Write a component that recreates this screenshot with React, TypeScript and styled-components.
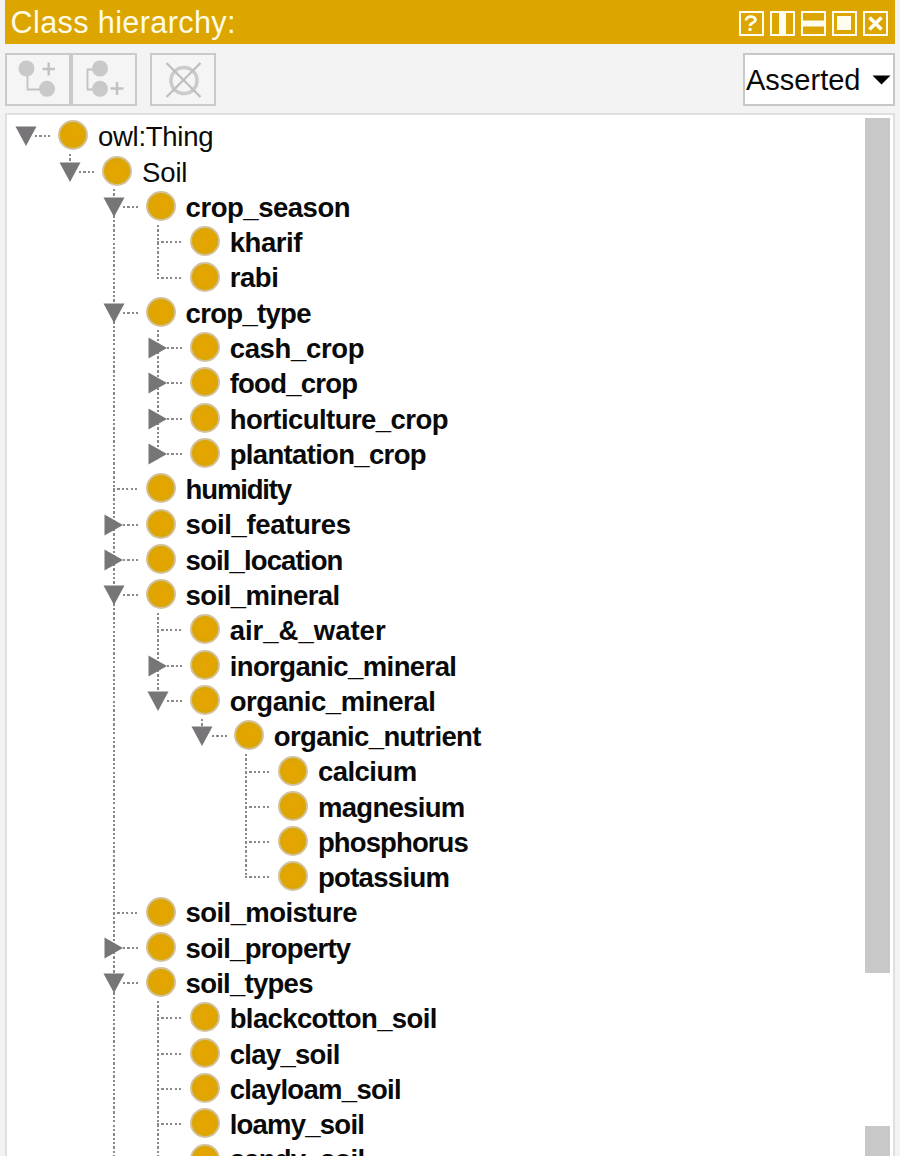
import React from "react";
import styled, { createGlobalStyle, css } from "styled-components";

const ROW = 35.29;
const INDENT = 44.1;

const GlobalStyle = createGlobalStyle`
  body { margin: 0; background: #f3f3f3; }
  * { box-sizing: border-box; }
`;

const Window = styled.div`
  height: 1156px;
  padding: 0 5px;
  overflow: hidden;
  display: flex;
  flex-direction: column;
  background: #f3f3f3;
  color: #0a0a0a;
  font-family: "Liberation Sans", Arial, sans-serif;
`;

const TitleBar = styled.header`
  flex: none;
  height: 44px;
  padding: 0 7.5px 0 5.5px;
  display: flex;
  align-items: center;
  justify-content: space-between;
  background: #dca500;
`;

const Title = styled.h1`
  margin: 0;
  font-size: 30.6px;
  line-height: 46px;
  font-weight: 400;
  letter-spacing: 0.38px;
  color: #fffbe6;
`;

const TitleActions = styled.div`
  display: flex;
  gap: 6px;
  padding-top: 2px;
  svg { display: block; }
`;

const Toolbar = styled.div`
  flex: none;
  height: 69px;
  padding-top: 9px;
  display: flex;
  align-items: flex-start;
`;

const ToolButton = styled.button<{ $gap?: number }>`
  width: 66px;
  height: 53px;
  margin: 0 0 0 ${(p) => p.$gap ?? 0}px;
  padding: 0;
  border: 2px solid #cacaca;
  background: #f5f5f5;
  svg { display: block; }
`;

const ModeSelect = styled.button`
  width: 152px;
  height: 53px;
  margin: 0 0 0 auto;
  padding: 1px 2px 0 1px;
  display: flex;
  align-items: center;
  justify-content: space-between;
  border: 2px solid #c8c8c8;
  background: #fff;
  color: #0a0a0a;
  font: 29px/50px "Liberation Sans", Arial, sans-serif;
  letter-spacing: 0px;
`;

const TreePanel = styled.main`
  flex: 1;
  min-height: 0;
  display: flex;
  justify-content: space-between;
  border: 2px solid #dfdfdf;
  border-bottom: 0;
  background: #fff;
`;

const Tree = styled.ul`
  margin: 0;
  padding: 3.8px 0 0 8px;
  list-style: none;
`;

const Row = styled.li`
  height: ${ROW}px;
  display: flex;
  align-items: center;
`;

const dots = (dir: string) =>
  css`repeating-linear-gradient(${dir}, #8a8a8a 0 2.1px, transparent 2.1px 4.41px)`;

const Guide = styled.span<{ $line: "none" | "full" | "half" }>`
  flex: none;
  width: ${INDENT}px;
  height: ${ROW}px;
  padding-left: 9.5px;
  &::before {
    content: "";
    display: ${(p) => (p.$line === "none" ? "none" : "block")};
    width: 2px;
    height: ${(p) => (p.$line === "half" ? "52%" : "100%")};
    background: ${dots("to bottom")};
  }
`;

const Branch = styled(Guide)`
  display: grid;
  grid-template-columns: ${INDENT - 9.5}px;
  align-items: center;
  > *, &::before { grid-area: 1 / 1; }
  &::before { align-self: start; }
`;

const Connector = styled.span<{ $leaf: boolean }>`
  justify-self: end;
  width: ${(p) => (p.$leaf ? 26 : 16)}px;
  height: 2px;
  margin-right: ${(p) => (p.$leaf ? 8.1 : 7.9)}px;
  background: ${dots("to right")};
`;

const Arrow = styled.svg`
  display: block;
  width: 22px;
  height: 22px;
  margin-left: -10px;
  fill: #777577;
`;

const ClassDot = styled.span`
  flex: none;
  width: 30px;
  height: 30px;
  margin: -2px 9.5px 0 -1.2px;
  border: 2px solid #d2c19c;
  border-radius: 50%;
  background: radial-gradient(#e4a500 0 35%, #d8a600 85%);
`;

const Label = styled.span<{ $plain: boolean; $tracking: number }>`
  padding: ${(p) => (p.$plain ? "1px 0 0 0.6px" : "1px 0 0")};
  white-space: nowrap;
  font-size: 27.5px;
  line-height: ${ROW}px;
  font-weight: ${(p) => (p.$plain ? 400 : 700)};
  letter-spacing: ${(p) => p.$tracking}px;
`;

const Scrollbar = styled.div`
  width: 28px;
  padding: 3px 3px 0 0;
  display: flex;
  flex-direction: column;
  gap: 153px;
`;

const Thumb = styled.div<{ $size?: number }>`
  flex: ${(p) => (p.$size ? `0 0 ${p.$size}px` : "1")};
  background: #c8c8c8;
`;

type State = "open" | "closed" | "leaf";
type Node = { name: string; depth: number; state: State; tracking: number };

const n = (depth: number, name: string, tracking: number, state: State = "leaf"): Node => ({
  depth, name, state, tracking,
});

const nodes: Node[] = [
  n(0, "owl:Thing", -0.28, "open"),
  n(1, "Soil", -0.17, "open"),
  n(2, "crop_season", -0.47, "open"),
  n(3, "kharif", -0.45),
  n(3, "rabi", -0.45),
  n(2, "crop_type", -0.7, "open"),
  n(3, "cash_crop", -0.33, "closed"),
  n(3, "food_crop", -0.77, "closed"),
  n(3, "horticulture_crop", -0.55, "closed"),
  n(3, "plantation_crop", -0.67, "closed"),
  n(2, "humidity", -1.15),
  n(2, "soil_features", -0.36, "closed"),
  n(2, "soil_location", -0.86, "closed"),
  n(2, "soil_mineral", -0.53, "open"),
  n(3, "air_&_water", 0),
  n(3, "inorganic_mineral", -0.6, "closed"),
  n(3, "organic_mineral", -0.45, "open"),
  n(4, "organic_nutrient", -0.62, "open"),
  n(5, "calcium", -0.53),
  n(5, "magnesium", -0.68),
  n(5, "phosphorus", -0.88),
  n(5, "potassium", -0.67),
  n(2, "soil_moisture", -0.58),
  n(2, "soil_property", -0.72, "closed"),
  n(2, "soil_types", -0.74, "open"),
  n(3, "blackcotton_soil", -0.62),
  n(3, "clay_soil", -0.7),
  n(3, "clayloam_soil", -0.7),
  n(3, "loamy_soil", -0.77),
  n(3, "sandy_soil", -0.75),
];

// A guide continues below a row while a later sibling exists at that depth;
// the list is cut off at its end, so depths 2 and 3 run on past the last row.
function continues(index: number, depth: number): boolean {
  for (let i = index + 1; i < nodes.length; i++) {
    if (nodes[i].depth === depth) return true;
    if (nodes[i].depth < depth) return false;
  }
  return depth === 2 || depth === 3;
}

function TreeRow({ node, index }: { node: Node; index: number }) {
  const { depth, state, name } = node;
  return (
    <Row>
      {Array.from({ length: depth }, (_, d) => (
        <Guide key={d} $line={continues(index, d) ? "full" : "none"} />
      ))}
      <Branch $line={depth === 0 ? "none" : continues(index, depth) ? "full" : "half"}>
        <Connector $leaf={state === "leaf"} />
        {state !== "leaf" && (
          <Arrow viewBox="0 0 22 22">
            <path d={state === "open" ? "M.5 1.5h21L11 21z" : "M1.5 .5v21L20 11z"} />
          </Arrow>
        )}
      </Branch>
      <ClassDot />
      <Label $plain={depth < 2} $tracking={node.tracking}>{name}</Label>
    </Row>
  );
}

function TitleIcon({ children }: { children: React.ReactNode }) {
  return (
    <svg width="25" height="25" viewBox="0 0 25 25" fill="none" stroke="#fffdf0" strokeWidth="2">
      <rect x="1" y="1" width="23" height="23" />
      {children}
    </svg>
  );
}

export default function App() {
  return (
    <>
      <GlobalStyle />
      <Window>
        <TitleBar>
          <Title>Class hierarchy:</Title>
          <TitleActions>
            <TitleIcon>
              <path d="M7 9.500c0-5 9.500-5 9.500-.5 0 3-5.500 2.500-5.500 6" strokeWidth="2.800" />
              <path d="M11 17v3" strokeWidth="3" />
            </TitleIcon>
            <TitleIcon><path d="M12.500 2v21" strokeWidth="7" /></TitleIcon>
            <TitleIcon><path d="M2 12.500h21" strokeWidth="6" /></TitleIcon>
            <TitleIcon><rect x="6" y="6" width="12" height="12" fill="#fffdf0" /></TitleIcon>
            <TitleIcon><path d="M6.500 6.500l12 12M18.500 6.500l-12 12" strokeWidth="3.700" /></TitleIcon>
          </TitleActions>
        </TitleBar>
        <Toolbar>
          <ToolButton aria-label="Add subclass">
            <svg width="62" height="49" viewBox="7 55 62 49" fill="#c9c9c9" stroke="#c2c2c2">
              <path d="M27.500 70v19.500H45" fill="none" strokeWidth="1.800" />
              <circle cx="26.500" cy="68.500" r="8" stroke="none" />
              <circle cx="47" cy="88.800" r="8" stroke="none" />
              <path d="M42.500 69h12.500M48.700 62.500v13" strokeWidth="2.500" />
            </svg>
          </ToolButton>
          <ToolButton aria-label="Add sibling class">
            <svg width="62" height="49" viewBox="73 55 62 49" fill="#c9c9c9" stroke="#c2c2c2">
              <path d="M99 69.500H87.500v20H99" fill="none" strokeWidth="1.800" />
              <circle cx="100" cy="68.500" r="8" stroke="none" />
              <circle cx="100" cy="88.800" r="8" stroke="none" />
              <path d="M110.500 88.500h13M117 82v13" strokeWidth="2.500" />
            </svg>
          </ToolButton>
          <ToolButton $gap={13} aria-label="Delete class">
            <svg width="62" height="49" viewBox="152 55 62 49" fill="none" stroke="#bebebe">
              <circle cx="184" cy="80.500" r="13" stroke="#cbcbcb" strokeWidth="3.600" />
              <path d="M166.500 63l34 34M200.500 63l-34 34" strokeWidth="2.200" />
            </svg>
          </ToolButton>
          <ModeSelect>
            Asserted
            <svg width="19" height="10" viewBox="0 0 19 10"><path d="M.5.500h18L9.500 9.500z" /></svg>
          </ModeSelect>
        </Toolbar>
        <TreePanel>
          <Tree>
            {nodes.map((node, i) => <TreeRow key={node.name} node={node} index={i} />)}
          </Tree>
          <Scrollbar>
            <Thumb $size={855} />
            <Thumb />
          </Scrollbar>
        </TreePanel>
      </Window>
    </>
  );
}
